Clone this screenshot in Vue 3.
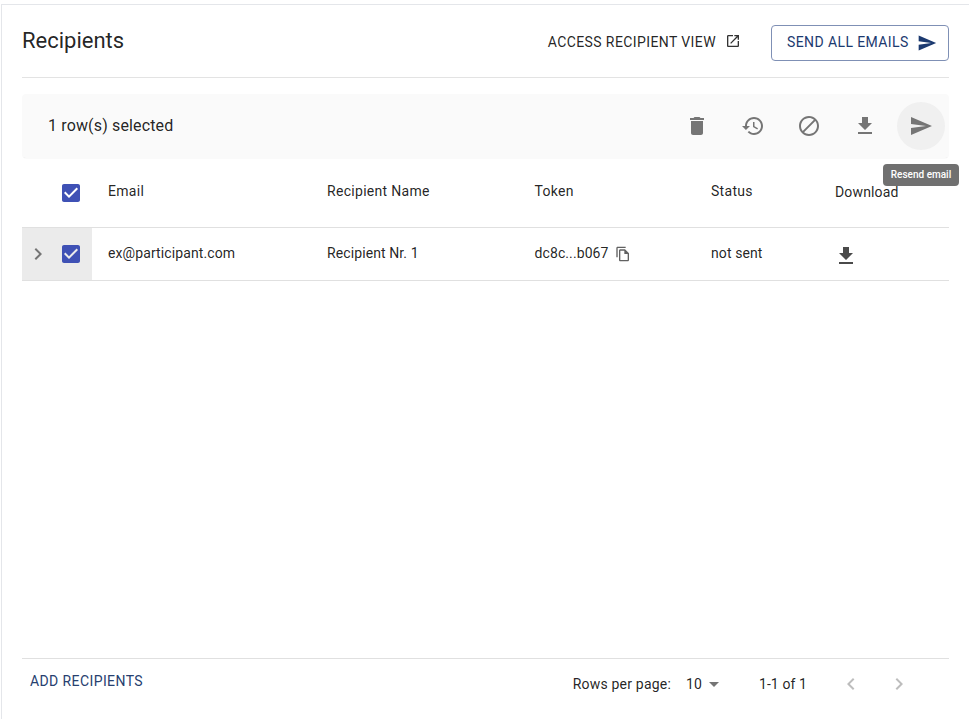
<script setup>
const P = {
  del: 'M6 19c0 1.1.9 2 2 2h8c1.1 0 2-.9 2-2V7H6v12zM19 4h-3.5l-1-1h-5l-1 1H5v2h14V4z',
  restore: 'M13 3c-4.97 0-9 4.03-9 9H1l3.89 3.89.07.14L9 12H6c0-3.87 3.13-7 7-7s7 3.13 7 7-3.13 7-7 7c-1.93 0-3.68-.79-4.94-2.06l-1.42 1.42C8.27 19.99 10.51 21 13 21c4.97 0 9-4.03 9-9s-4.03-9-9-9zm-1 5v5l4.28 2.54.72-1.21-3.5-2.08V8H12z',
  block: 'M12 2C6.48 2 2 6.48 2 12s4.48 10 10 10 10-4.48 10-10S17.52 2 12 2zM4 12c0-4.42 3.58-8 8-8 1.85 0 3.55.63 4.9 1.69L5.69 16.9C4.63 15.55 4 13.85 4 12zm8 8c-1.85 0-3.55-.63-4.9-1.69L18.31 7.1C19.37 8.45 20 10.15 20 12c0 4.42-3.58 8-8 8z',
  download: 'M19 9h-4V3H9v6H5l7 7 7-7zM5 18v2h14v-2H5z',
  send: 'M2.01 21L23 12 2.01 3 2 10l15 2-15 2z',
  launch: 'M19 19H5V5h7V3H5c-1.11 0-2 .9-2 2v14c0 1.1.89 2 2 2h14c1.1 0 2-.9 2-2v-7h-2v7zM14 3v2h3.59l-9.83 9.83 1.41 1.41L19 6.41V10h2V3h-7z',
  copy: 'M16 1H4c-1.1 0-2 .9-2 2v14h2V3h12V1zm-1 4H8c-1.1 0-1.99.9-1.99 2L6 21c0 1.1.89 2 1.99 2H19c1.1 0 2-.9 2-2V11l-6-6zM8 21V7h6v5h5v9H8z',
  right: 'M10 6L8.59 7.41 13.17 12l-4.58 4.59L10 18l6-6z',
  left: 'M15.41 7.41L14 6l-6 6 6 6 1.41-1.41L10.83 12z',
  drop: 'M7 10l5 5 5-5z',
  check: 'M19 3H5c-1.11 0-2 .9-2 2v14c0 1.1.89 2 2 2h14c1.11 0 2-.9 2-2V5c0-1.1-.89-2-2-2zm-9 14l-5-5 1.41-1.41L10 14.17l7.59-7.59L19 8l-9 9z',
}
const tools = [
  { name: 'del', active: false },
  { name: 'restore', active: false },
  { name: 'block', active: false },
  { name: 'download', active: false },
  { name: 'send', active: true },
]
</script>

<template>
  <div class="card">
    <header class="head">
      <h1 class="title">Recipients</h1>
      <div class="head-actions">
        <button class="link">
          <span>ACCESS RECIPIENT VIEW</span>
          <svg class="launch" viewBox="0 0 24 24"><path :d="P.launch" /></svg>
        </button>
        <button class="outline">
          <span>SEND ALL EMAILS</span>
          <svg class="send" viewBox="0 0 24 24"><path :d="P.send" /></svg>
        </button>
      </div>
    </header>

    <section class="toolbar">
      <span class="selected">1 row(s) selected</span>
      <div class="tools">
        <span v-for="t in tools" :key="t.name" class="tool" :class="{ active: t.active }">
          <svg viewBox="0 0 24 24"><path :d="P[t.name]" /></svg>
        </span>
      </div>
      <div class="tooltip">Resend email</div>
    </section>

    <div class="table">
      <div class="row header">
        <div class="lead">
          <span class="chev"></span>
          <svg class="cb" viewBox="0 0 24 24"><path :d="P.check" /></svg>
        </div>
        <div class="cell">Email</div>
        <div class="cell">Recipient Name</div>
        <div class="cell">Token</div>
        <div class="cell">Status</div>
        <div class="cell dl-head">Download</div>
      </div>
      <div class="row body">
        <div class="lead shaded">
          <svg class="chev" viewBox="0 0 24 24"><path :d="P.right" /></svg>
          <svg class="cb" viewBox="0 0 24 24"><path :d="P.check" /></svg>
        </div>
        <div class="cell">ex@participant.com</div>
        <div class="cell">Recipient Nr. 1</div>
        <div class="cell token">
          <span>dc8c...b067</span>
          <svg class="copy" viewBox="0 0 24 24"><path :d="P.copy" /></svg>
        </div>
        <div class="cell">not sent</div>
        <div class="cell">
          <svg class="dl" viewBox="0 0 24 24"><path :d="P.download" /></svg>
        </div>
      </div>
    </div>

    <footer class="foot">
      <button class="add">ADD RECIPIENTS</button>
      <div class="pager">
        <span class="rpp">Rows per page:</span>
        <span class="size">10</span>
        <svg class="drop" viewBox="0 0 24 24"><path :d="P.drop" /></svg>
        <span class="range">1-1 of 1</span>
        <svg class="nav" viewBox="0 0 24 24"><path :d="P.left" /></svg>
        <svg class="nav next" viewBox="0 0 24 24"><path :d="P.right" /></svg>
      </div>
    </footer>
  </div>
</template>

<style>
html, body { margin: 0; background: #fff; overflow: hidden; }
</style>

<style scoped>
.card {
  box-sizing: border-box;
  height: 715px;
  margin: 4px 0 0 1px;
  padding: 0 20px 0 20px;
  border-top: 1px solid #e4e6ea;
  border-left: 1px solid #e4e6ea;
  display: flex;
  flex-direction: column;
  font-family: Roboto, "Liberation Sans", sans-serif;
  font-size: 14px;
  letter-spacing: 0.1px;
  color: rgba(0, 0, 0, 0.87);
  background: #fff;
}
.head {
  height: 72px;
  flex: none;
  display: flex;
  align-items: center;
  justify-content: space-between;
  border-bottom: 1px solid #e3e3e3;
  box-sizing: content-box;
}
.title {
  margin: 0;
  font-size: 22px;
  font-weight: 400;
  letter-spacing: 0;
  line-height: 28px;
}
.head-actions { display: flex; align-items: center; margin-top: 4px; }
button {
  font: inherit;
  letter-spacing: 0.02857em;
  background: none;
  border: 0;
  padding: 0;
  color: inherit;
}
.link { display: flex; align-items: center; margin-right: 30px; padding-bottom: 2px; }
.launch { width: 16px; height: 16px; margin-left: 9px; fill: #333; margin-top: -2px; }
.outline {
  box-sizing: border-box;
  width: 178px;
  height: 36px;
  border: 1px solid #7f90b5;
  border-radius: 4px;
  color: #1c3a70;
  display: flex;
  align-items: center;
  padding: 0 0 2px 15px;
}
.send { width: 20px; height: 20px; margin: 2px 0 0 8px; fill: #1c3a70; }

.toolbar {
  position: relative;
  flex: none;
  height: 64px;
  margin-top: 16px;
  padding: 0 4px 0 26px;
  display: flex;
  align-items: center;
  justify-content: space-between;
  background: #fafafa;
  border-radius: 4px;
  box-shadow: 0 1px 1px -1px rgba(0, 0, 0, 0.2);
  font-size: 16px;
  letter-spacing: 0.15px;
}
.selected { margin-bottom: 2px; }
.tools { display: flex; gap: 8px; }
.tool {
  width: 48px;
  height: 48px;
  border-radius: 50%;
  display: flex;
  align-items: center;
  justify-content: center;
  fill: #757575;
}
.tool svg { width: 24px; height: 24px; }
.tool.active { background: #f0f0f0; }
.tooltip {
  position: absolute;
  left: 861px;
  top: 70px;
  width: 76px;
  height: 22px;
  border-radius: 4px;
  background: #707070;
  color: #fff;
  font-size: 10px;
  font-weight: 500;
  letter-spacing: 0;
  line-height: 21px;
  text-align: center;
  z-index: 2;
}

.table { flex: 1; }
.row {
  display: grid;
  grid-template-columns: 70px 219px 207.5px 176.5px 124px 1fr;
  border-bottom: 1px solid #e0e0e0;
}
.header { height: 69px; }
.body { height: 52px; }
.lead { position: relative; display: flex; align-items: center; }
.header .lead { align-items: flex-start; padding-top: 23px; }
.shaded { background: #ebebeb; }
.chev { width: 24px; height: 24px; margin-left: 4px; fill: #757575; flex: none; }
.cb { width: 24px; height: 24px; margin-left: 9px; fill: #3f51b5; flex: none; }
.cell {
  padding-left: 16px;
  display: flex;
  align-items: center;
  color: rgba(0, 0, 0, 0.87);
}
.header .cell { align-items: flex-start; padding-top: 25px; line-height: 16px; letter-spacing: 0.3px; }
.header .dl-head { padding-top: 26px; letter-spacing: 0.15px; }
.body .cell { padding-bottom: 2px; }
.token span { white-space: nowrap; }
.copy { width: 16px; height: 16px; margin-left: 6px; fill: #616161; margin-top: 2px; }
.dl { width: 24px; height: 24px; fill: #4a4a4a; margin-left: -1px; margin-top: 6px; }

.foot {
  flex: none;
  height: 56px;
  margin-bottom: 4px;
  border-top: 1px solid #e0e0e0;
  display: flex;
  justify-content: space-between;
}
.add { height: 44px; margin-left: 8px; color: #27406f; }
.pager { display: flex; align-items: center; height: 50px; padding-right: 38px; }
.rpp { letter-spacing: 0.2px; }
.size { margin-left: 15px; }
.drop { width: 24px; height: 24px; fill: #757575; }
.range { margin-left: 33px; }
.nav { width: 24px; height: 24px; fill: #bdbdbd; margin-left: 32px; }
.next { margin-left: 24px; }
</style>
